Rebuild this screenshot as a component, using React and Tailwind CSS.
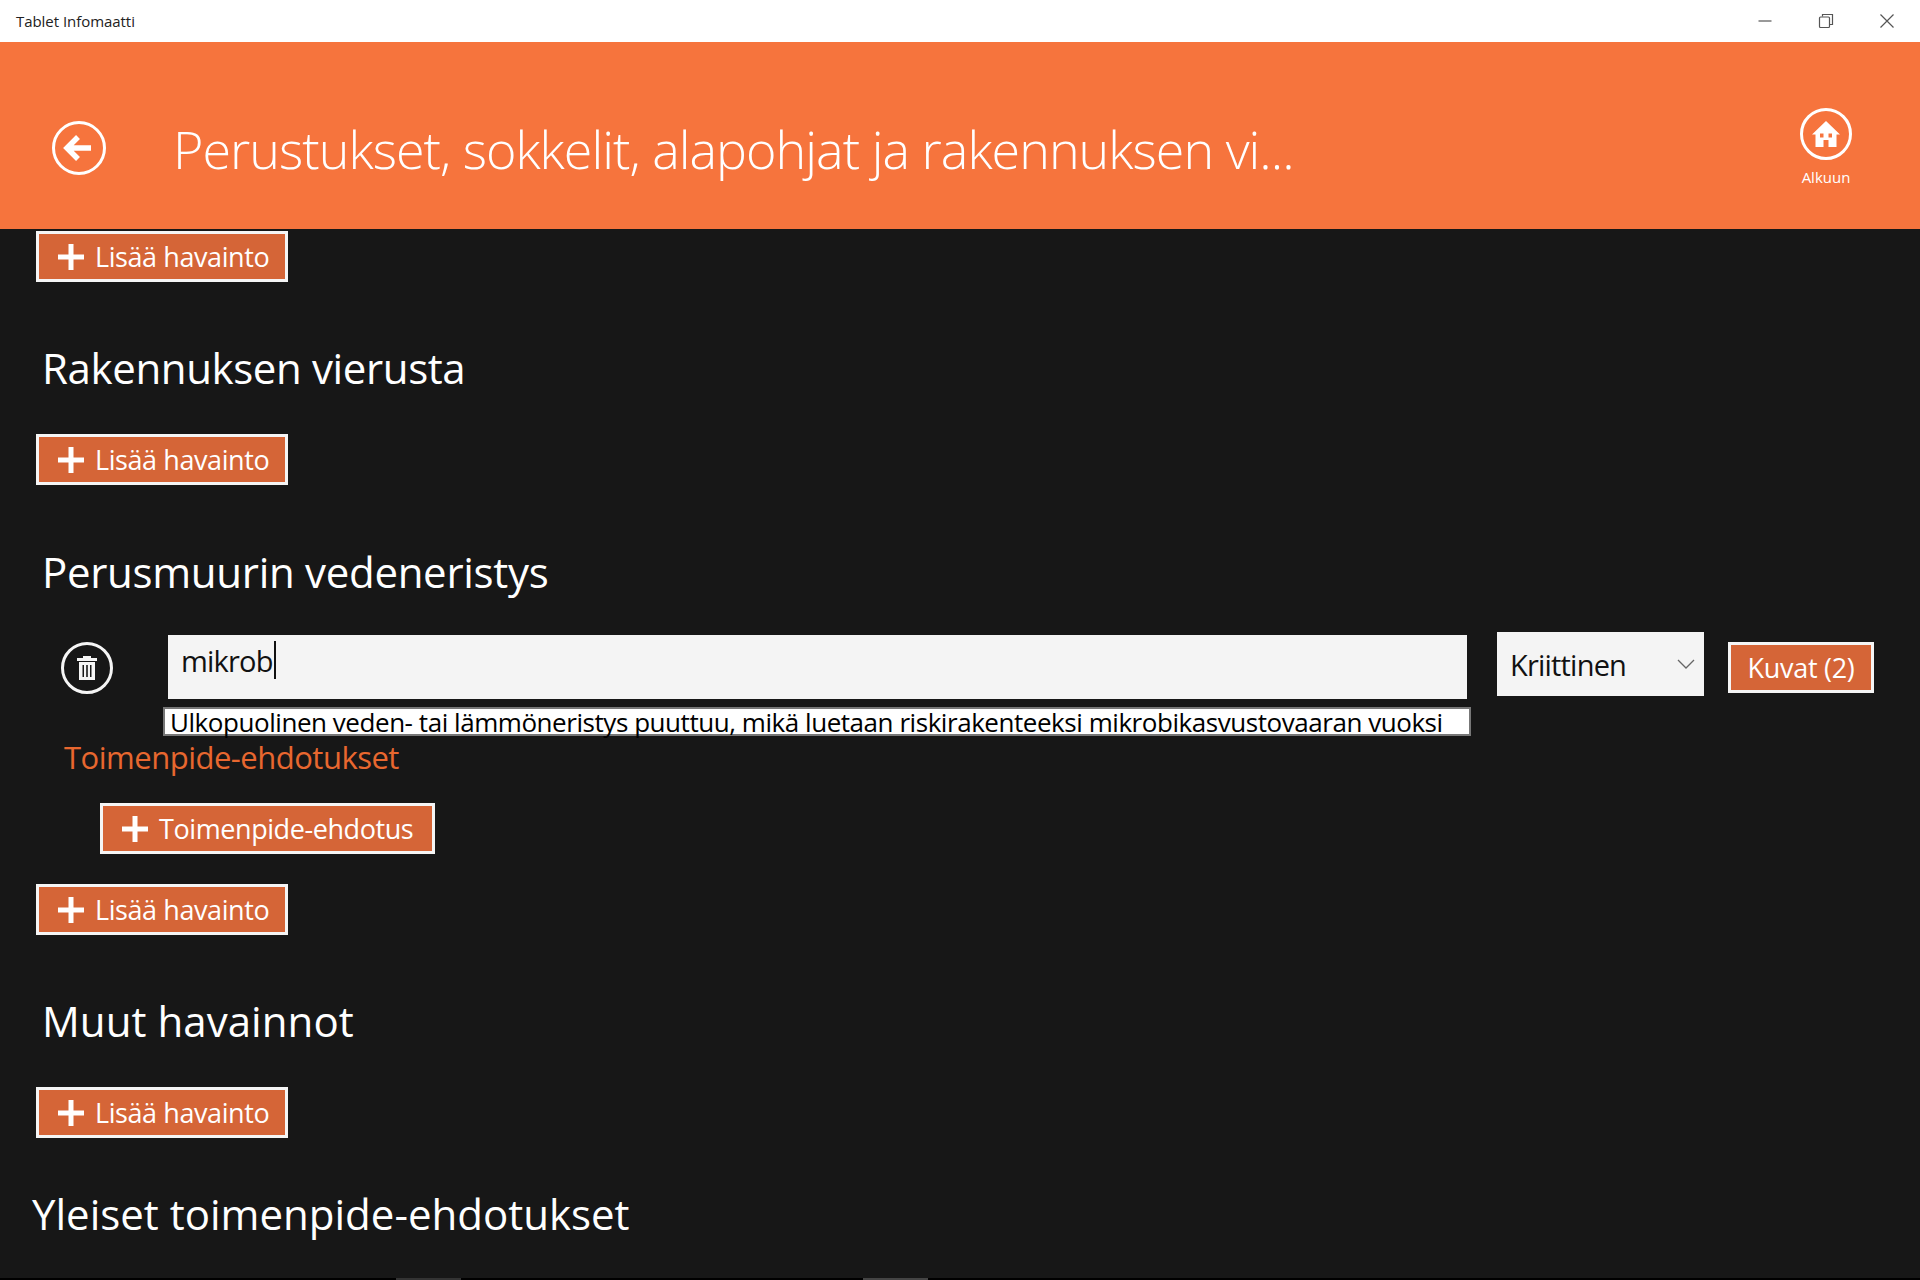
const FONT = 'font-["Open_Sans","Noto_Sans",sans-serif]'

function Plus() {
  return (
    <svg width="28" height="28" viewBox="0 0 28 28" className="shrink-0">
      <path d="M11.5 1h5v10.500H27v5H16.500v10.500h-5V16.500H1v-5h10.500z" fill="#fff" />
    </svg>
  )
}

function AddButton({ label, className = '', width = 'w-[252px]' }) {
  return (
    <button className={`flex h-[51px] ${width} items-center border-[3px] border-[#f5f5f5] bg-[#d56537] pl-[18px] text-white ${className}`}>
      <Plus />
      <span className="ml-[10px] text-[27px] leading-none tracking-[-0.42px]">{label}</span>
    </button>
  )
}

function Heading({ children, className = '' }) {
  return <h2 className={`h-[56px] text-[42px] leading-[56px] text-white ${className}`}>{children}</h2>
}

export default function App() {
  return (
    <div className={`flex h-[1280px] w-[1920px] flex-col overflow-hidden bg-[#171717] ${FONT}`}>
      {/* title bar */}
      <div className="flex h-[42px] shrink-0 items-center justify-between bg-white pl-4 pr-[3px]">
        <span className="text-[15px] tracking-[-0.05px] text-[#222]">Tablet Infomaatti</span>
        <div className="flex items-center text-[#555]">
          <div className="flex w-[61px] justify-center">
            <svg width="16" height="16" viewBox="0 0 16 16"><path d="M1.500 8h13" stroke="currentColor" strokeWidth="1.200" /></svg>
          </div>
          <div className="flex w-[61px] justify-center">
            <svg width="16" height="16" viewBox="0 0 16 16" fill="none" stroke="currentColor" strokeWidth="1.200">
              <path d="M4.500 3.500V1.500h10v10h-2.500" />
              <rect x="1.500" y="4" width="10" height="10.500" rx="1" />
            </svg>
          </div>
          <div className="flex w-[61px] justify-center">
            <svg width="16" height="16" viewBox="0 0 16 16"><path d="M1.500 1.500l13 13M14.500 1.500l-13 13" stroke="currentColor" strokeWidth="1.200" /></svg>
          </div>
        </div>
      </div>

      {/* header */}
      <header className="flex h-[187px] shrink-0 bg-[#f6743d] text-white">
        <div className="ml-[52px] mt-[79px] flex h-[54px] w-[54px] items-center justify-center rounded-full border-[3px] border-white">
          <svg width="32" height="28" viewBox="0 0 32 28">
            <path d="M15 3L4 14l11 11M4 14h24" fill="none" stroke="#fff" strokeWidth="5.500" />
          </svg>
        </div>
        <h1 className="ml-[67px] mt-[69px] h-[76px] whitespace-nowrap text-[52px] font-light leading-[76px] tracking-[-0.97px]">
          Perustukset, sokkelit, alapohjat ja rakennuksen vi...
        </h1>
        <div className="ml-auto mr-[64px] mt-[66px] flex w-[60px] flex-col items-center">
          <div className="flex h-[52px] w-[52px] items-center justify-center rounded-full border-[3px] border-white">
            <svg width="30" height="28" viewBox="0 0 30 28">
              <path fillRule="evenodd" d="M15 1L29 14.500h-3.500V27H17.500v-7h-5v7H4.500V14.500H1zM9 13.500v4h3.500v-4zM17.500 13.500v4H21v-4z" fill="#fff" />
            </svg>
          </div>
          <span className="mt-[6px] text-[15px]">Alkuun</span>
        </div>
      </header>

      {/* content */}
      <main className="flex flex-1 flex-col">
        <AddButton label="Lisää havainto" className="ml-[36px] mt-[2px]" />

        <Heading className="ml-[42px] mt-[58px] tracking-[-0.38px]">Rakennuksen vierusta</Heading>
        <AddButton label="Lisää havainto" className="ml-[36px] mt-[38px]" />

        <Heading className="ml-[42px] mt-[59px] tracking-[-0.3px]">Perusmuurin vedeneristys</Heading>

        <div className="mt-[32px] flex h-[67px] items-start">
          <div className="ml-[61px] mt-[10px] flex h-[52px] w-[52px] items-center justify-center rounded-full border-[3px] border-[#f5f5f5]">
            <svg width="22" height="26" viewBox="0 0 22 26" fill="#f5f5f5">
              <path fillRule="evenodd" d="M1 3h6V1h8v2h6v3H1zM3 7h16v18H3zM6.500 10v12h1.500V10zM10.200 10v12h1.600V10zM14 10v12h1.500V10z" />
            </svg>
          </div>
          <div className="ml-[55px] mt-[3px] flex h-[64px] w-[1299px] items-start bg-[#f4f4f4] pl-[13px] pt-[3px]">
            <span className="text-[29px] leading-[46px] tracking-[-0.8px] text-[#111]">mikrob</span>
            <span className="ml-[1px] mt-[3px] h-[38px] w-[2px] bg-[#111]" />
          </div>
          <div className="ml-[30px] flex h-[64px] w-[207px] items-center justify-between bg-[#f4f4f4] pl-[13px] pr-[9px]">
            <span className="text-[29px] leading-none tracking-[-0.8px] text-[#111]">Kriittinen</span>
            <svg width="18" height="10" viewBox="0 0 18 10" fill="none" stroke="#666" strokeWidth="1.300">
              <path d="M1 1l8 8 8-8" />
            </svg>
          </div>
          <button className="ml-[24px] mt-[10px] h-[51px] w-[146px] border-[3px] border-[#f5f5f5] bg-[#d56537] text-[27px] leading-none tracking-[-0.3px] text-white">
            Kuvat (2)
          </button>
        </div>

        <div className="ml-[163px] mt-[8px] flex h-[29px] w-[1308px] items-center border-2 border-[#777] bg-white pl-[5px]">
          <span className="whitespace-nowrap text-[26px] leading-none tracking-[-0.45px] text-black">
            Ulkopuolinen veden- tai lämmöneristys puuttuu, mikä luetaan riskirakenteeksi mikrobikasvustovaaran vuoksi
          </span>
        </div>

        <span className="ml-[64px] mt-[2px] h-[38px] text-[31px] leading-[38px] tracking-[-0.5px] text-[#e8672f]">Toimenpide-ehdotukset</span>

        <AddButton label="Toimenpide-ehdotus" width="w-[335px]" className="ml-[100px] mt-[27px]" />
        <AddButton label="Lisää havainto" className="ml-[36px] mt-[30px]" />

        <Heading className="ml-[42px] mt-[58px] tracking-[0.06px]">Muut havainnot</Heading>
        <AddButton label="Lisää havainto" className="ml-[36px] mt-[38px]" />

        <Heading className="ml-[32px] mt-[48px]">Yleiset toimenpide-ehdotukset</Heading>
      </main>

      {/* scroll strip along the bottom edge */}
      <div className="flex h-[2px] shrink-0 bg-black">
        <div className="ml-[396px] w-[65px] bg-[#333]" />
        <div className="ml-[402px] w-[65px] bg-[#444]" />
      </div>
    </div>
  )
}
